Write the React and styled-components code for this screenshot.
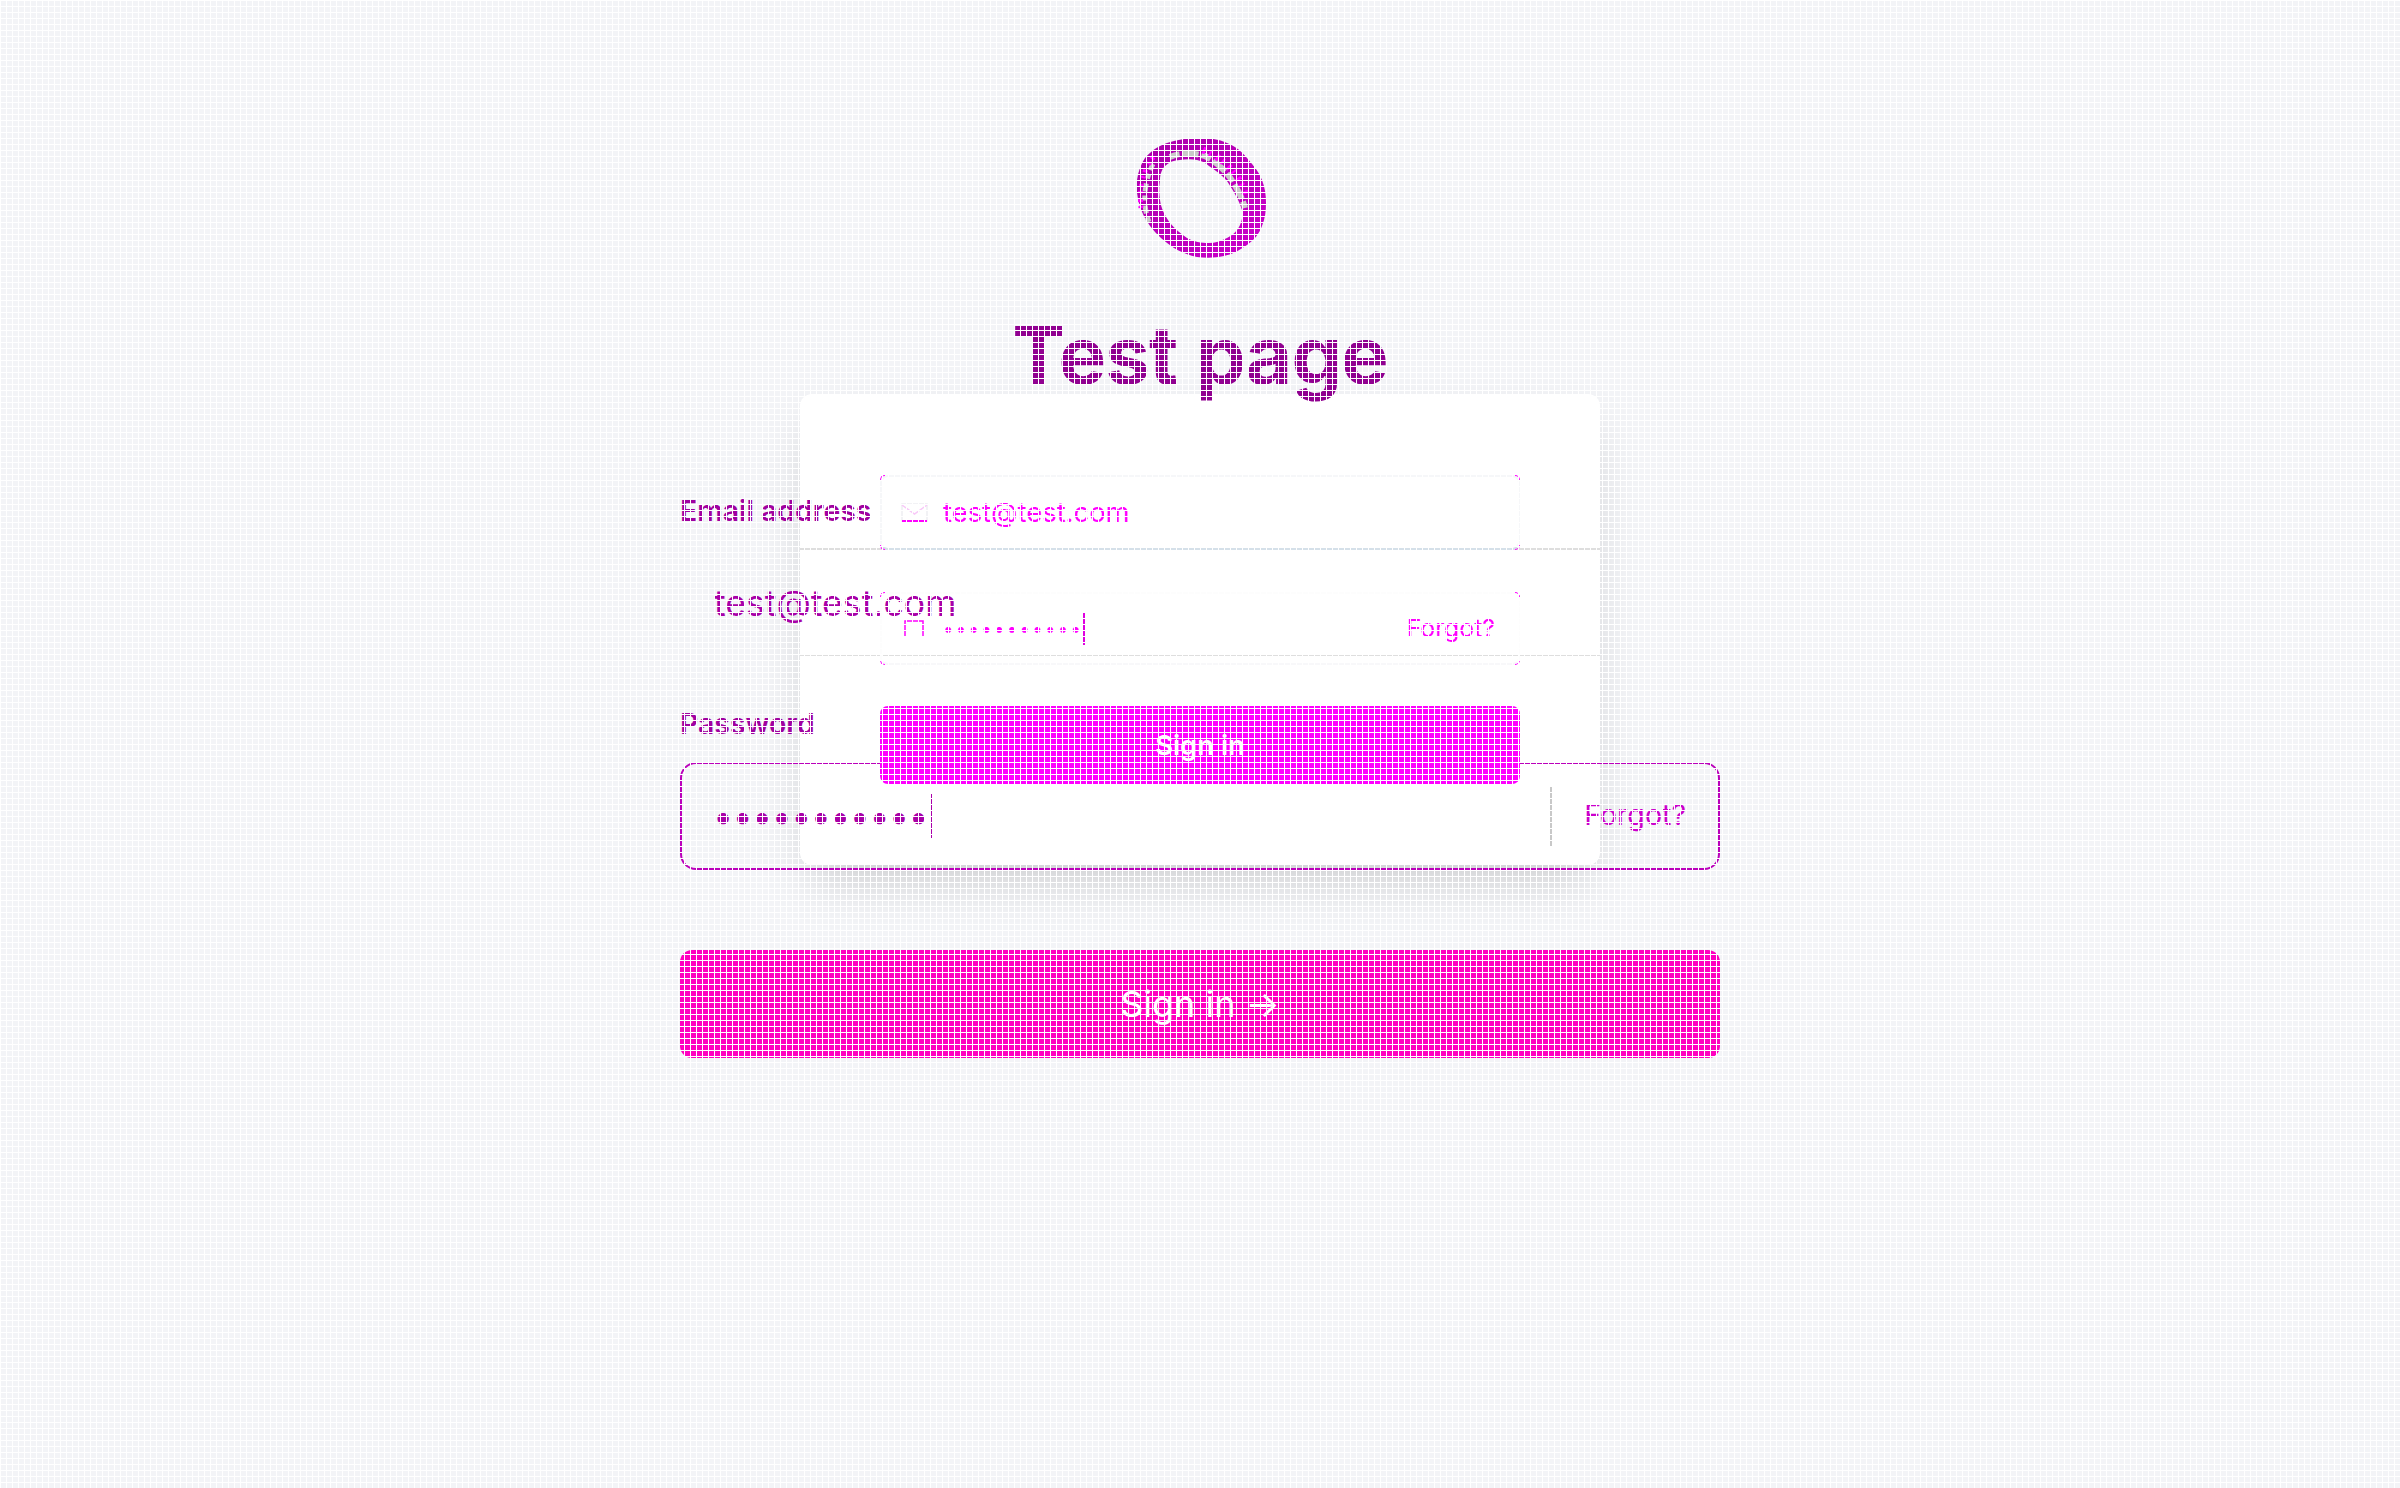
import React from "react";
import styled, { createGlobalStyle, css } from "styled-components";

const GlobalStyle = createGlobalStyle`
  html, body {
    margin: 0;
    padding: 0;
    background: #f3f4f7;
    font-family: Inter, "Liberation Sans", sans-serif;
  }
`;

const Page = styled.div`
  position: relative;
  min-height: 1488px;
  display: flex;
  flex-direction: column;
  align-items: center;
  padding-top: 138px;
  box-sizing: border-box;
  overflow: hidden;
  background: #f3f4f7;
`;

/* 6px white mesh that sits over everything in the picture */
const Mesh = styled.div`
  position: absolute;
  inset: 0;
  z-index: 5;
  pointer-events: none;
  background-image:
    linear-gradient(#fff 1px, transparent 1px),
    linear-gradient(90deg, #fff 1px, transparent 1px);
  background-size: 6px 6px;
`;

const Logo = styled.svg`
  display: block;
  width: 130px;
  height: 122px;
  margin-left: 3px;
  flex: none;
`;

const Title = styled.h1`
  position: relative;
  z-index: 2;
  margin: 49px 0 0;
  height: 85px;
  font-size: 80px;
  line-height: 91px;
  font-weight: 700;
  letter-spacing: -0.9px;
  color: #900090;
`;

const Stack = styled.div`
  display: grid;
  width: 1040px;
  flex: none;
`;

const Card = styled.div`
  grid-area: 1 / 1;
  justify-self: center;
  align-self: start;
  width: 800px;
  height: 471px;
  background: #fff;
  border-radius: 12px;
  box-shadow: 0 25px 50px -12px rgba(0, 0, 0, 0.18);
`;

const OuterForm = styled.form`
  grid-area: 1 / 1;
  z-index: 1;
  display: flex;
  flex-direction: column;
  padding-top: 101px;
`;

const OuterLabel = styled.label`
  height: 32px;
  margin-bottom: ${(p) => p.$below}px;
  font-size: 28.4px;
  line-height: 32px;
  font-weight: 600;
  color: #a000a0;
`;

const OuterEmail = styled.div`
  height: 106px;
  margin-bottom: 52px;
  padding-left: 34px;
  display: flex;
  align-items: center;
  font-size: 35.6px;
  color: #a800a8;
`;

const OuterPassword = styled.div`
  height: 108px;
  box-sizing: border-box;
  display: flex;
  align-items: center;
  padding-left: 31px;
  border: 2px solid #bb00bb;
  border-radius: 16px;
`;

const Dots = styled.span`
  font-size: ${(p) => p.$size}px;
  line-height: 1;
  letter-spacing: ${(p) => p.$gap}px;
  color: ${(p) => p.$color};
`;

const Caret = styled.span`
  width: 2px;
  height: ${(p) => p.$height}px;
  margin-left: ${(p) => p.$left || 0}px;
  background: ${(p) => p.$color};
`;

const Divider = styled.span`
  width: 2px;
  height: 59px;
  margin-left: auto;
  background: #c8c8c8;
`;

const OuterForgot = styled.a`
  margin: 0 32px 3px 32px;
  font-size: 28.6px;
  color: #cc00cc;
`;

const BigButton = styled.button`
  margin-top: 80px;
  height: 108px;
  border: 0;
  border-radius: 12px;
  background: #ff00c0;
  color: #fff;
  font-family: inherit;
  font-size: 36px;
  font-weight: 400;
`;

const InnerForm = styled.form`
  grid-area: 1 / 1;
  z-index: 2;
  justify-self: center;
  width: 800px;
  display: flex;
  flex-direction: column;
`;

const Row = styled.div`
  padding: ${(p) => p.$top}px 80px 0;
  border-bottom: ${(p) => p.$line}px solid #dedede;
`;

const InputBox = styled.div`
  position: relative;
  box-sizing: border-box;
  height: ${(p) => p.$height}px;
  margin-bottom: ${(p) => p.$overlap}px;
  display: flex;
  align-items: center;
  border: 2px solid ${(p) => (p.$faint ? "#fdfdfd" : "#f6f7f9")};
  border-bottom-color: ${(p) => p.$bottom};
  border-radius: 8px;
`;

const Corner = styled.i`
  position: absolute;
  width: 4px;
  height: 4px;
  border: 0 solid #ff00ff;
  ${(p) => (p.$v === "top" ? css`top: -2px; border-top-width: 1.5px;` : css`bottom: -2px; border-bottom-width: 1.5px;`)}
  ${(p) => (p.$h === "left" ? css`left: -2px; border-left-width: 1.5px;` : css`right: -2px; border-right-width: 1.5px;`)}
  ${(p) => `border-${p.$v}-${p.$h}-radius: 5px;`}
`;

const IconSlot = styled.svg`
  display: block;
  flex: none;
  margin-left: ${(p) => p.$left}px;
  margin-right: ${(p) => p.$right}px;
`;

const InnerValue = styled.span`
  margin-bottom: 1px;
  font-size: 27.4px;
  color: #ff00ff;
`;

const InnerForgot = styled.a`
  margin: 0 23px 2px auto;
  font-size: 24.8px;
  color: #ff00ff;
`;

const SmallButton = styled.button`
  display: block;
  width: 100%;
  height: 78px;
  margin-top: 50px;
  border: 0;
  border-radius: 8px;
  background: #ff00ff;
  color: #fff;
  font-family: inherit;
  font-size: 27.4px;
  font-weight: 600;
`;

function Corners() {
  return (
    <>
      <Corner $v="top" $h="left" />
      <Corner $v="top" $h="right" />
      <Corner $v="bottom" $h="left" />
      <Corner $v="bottom" $h="right" />
    </>
  );
}

export default function App() {
  return (
    <Page>
      <GlobalStyle />
      <Logo viewBox="0 0 130 122">
        <defs>
          <linearGradient id="ring" x1="0" y1="0" x2="1" y2="1">
            <stop offset="0" stopColor="#a800a8" />
            <stop offset="1" stopColor="#cc00cc" />
          </linearGradient>
        </defs>
        <path
          fillRule="evenodd"
          fill="url(#ring)"
          d="M60 0C72 0 82 1 90 5C100 9 105 14 110 20C117 28 122 34 125 42C128 50 129 57 129 65C129 73 128 81 125 88C122 96 117 102 110 107C103 112 96 116 87 118C78 120 69 120 60 119C51 117 44 114 37 110C28 104 20 97 13 88C8 81 4 73 2 65C0 57 -1 50 0 42C1 34 4 26 8 20C14 13 21 8 30 5C39 2 49 0 60 0Z
             M23 42C23 36 25 31 28 28C32 24 37 22 43 22C49 21 55 21 60 22C65 23 69 25 72 28C78 32 85 37 90 43C96 52 102 62 105 72C106 78 105 83 103 87C100 93 96 97 90 100C84 103 78 105 72 105C64 105 57 104 50 100C44 96 38 91 33 85C28 78 24 70 23 62C22 55 22 48 23 42Z"
        />
        <path
          fill="none"
          stroke="#c9c9c9"
          strokeWidth="6"
          strokeDasharray="10 3 16 3"
          d="M33 19C44 14 57 15 68 18C80 24 90 34 96 44C102 54 106 62 108 70"
        />
        <path
          fill="none"
          stroke="#c9c9c9"
          strokeWidth="5"
          strokeDasharray="5 4 8 5"
          d="M12 84C5 66 7 44 16 26"
        />
        <path
          fill="none"
          stroke="#ff00ff"
          strokeWidth="5"
          strokeDasharray="2 4 3 6"
          d="M4 70C2 52 5 32 18 17"
        />
        <path
          fill="none"
          stroke="#ff00ff"
          strokeWidth="7"
          strokeDasharray="3 4 2 6"
          d="M66 12C82 18 96 30 104 46C106 50 108 54 109 58"
        />
      </Logo>
      <Title>Test page</Title>
      <Stack>
        <Card />
        <OuterForm>
          <OuterLabel $below={23}>Email address</OuterLabel>
          <OuterEmail>test@test.com</OuterEmail>
          <OuterLabel $below={22}>Password</OuterLabel>
          <OuterPassword>
            <Dots $size={36} $gap={-0.7} $color="#a800a8">•••••••••••</Dots>
            <Caret $height={44} $color="#aa00aa" $left={2} />
            <Divider />
            <OuterForgot>Forgot?</OuterForgot>
          </OuterPassword>
          <BigButton type="button">Sign in →</BigButton>
        </OuterForm>
        <InnerForm>
          <Row $top={81} $line={2}>
            <InputBox $height={75} $overlap={-2} $bottom="#d5e0e9">
              <Corners />
              <IconSlot width="27" height="19" viewBox="0 0 27 19" $left={19} $right={15}>
                <path d="M1 1H26V18H1Z" fill="none" stroke="#eeeef2" strokeWidth="1.5" />
                <path d="M1 2L13.5 11L26 2" fill="none" stroke="#f8c8f8" strokeWidth="1.5" />
                <path d="M1 18H26" stroke="#ff00ff" strokeWidth="2" />
              </IconSlot>
              <InnerValue>test@test.com</InnerValue>
            </InputBox>
          </Row>
          <Row $top={42} $line={1}>
            <InputBox $height={73} $overlap={-10} $bottom="#f8f8fa" $faint>
              <Corners />
              <IconSlot width="20" height="17" viewBox="0 0 20 17" $left={22} $right={19}>
                <path d="M1 17V1H19V17" fill="none" stroke="#ff00ff" strokeWidth="1.5" />
              </IconSlot>
              <Dots $size={18.5} $gap={2.34} $color="#ff00ff">•••••••••••</Dots>
              <Caret $height={32} $color="#e000e0" />
              <InnerForgot>Forgot?</InnerForgot>
            </InputBox>
          </Row>
          <Row $top={0} $line={0}>
            <SmallButton type="button">Sign in</SmallButton>
          </Row>
        </InnerForm>
      </Stack>
      <Mesh />
    </Page>
  );
}
